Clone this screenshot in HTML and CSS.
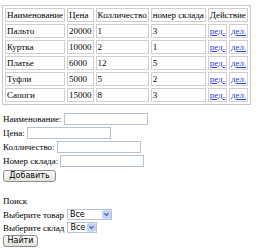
FILE: index.html
```html
<!DOCTYPE html>
<html>
    <head>
        <title>Склад</title>
        <meta charset="utf-8">
        <link rel="stylesheet" href="styles.css">
    </head>
    <body>
        <table class="goods">
            <tr>
                <th>Наименование</th>
                <th>Цена</th>
                <th>Колличество</th>
                <th>номер склада</th>
                <th colspan="2">Действие</th>
            </tr>
            <tr><td>Пальто</td><td>20000</td><td>1</td><td>3</td><td><a href="#">ред.</a></td><td><a href="#">дел.</a></td></tr>
            <tr><td>Куртка</td><td>10000</td><td>2</td><td>1</td><td><a href="#">ред.</a></td><td><a href="#">дел.</a></td></tr>
            <tr><td>Платье</td><td>6000</td><td>12</td><td>5</td><td><a href="#">ред.</a></td><td><a href="#">дел.</a></td></tr>
            <tr><td>Туфли</td><td>5000</td><td>5</td><td>2</td><td><a href="#">ред.</a></td><td><a href="#">дел.</a></td></tr>
            <tr><td>Сапоги</td><td>15000</td><td>8</td><td>3</td><td><a href="#">ред.</a></td><td><a href="#">дел.</a></td></tr>
        </table>

        <form class="add_form">
            <div class="row">Наименование: <input type="text" class="field"></div>
            <div class="row">Цена: <input type="text" class="field"></div>
            <div class="row">Колличество: <input type="text" class="field"></div>
            <div class="row">Номер склада: <input type="text" class="field"></div>
            <div class="row"><button type="button" class="btn btn_add">Добавить</button></div>
        </form>

        <form class="search_form">
            <div class="row">Поиск</div>
            <div class="row">Выберите товар
                <span class="sel sel_wide">
                    <select><option>Все</option></select>
                    <svg class="arrow" width="11" height="10" viewBox="0 0 11 10"><rect x="0.5" y="0.5" width="10" height="9" rx="1" fill="#c3d3fd" stroke="#b5c8f7"/><path d="M3 3.5 L5.5 6 L8 3.5" fill="none" stroke="#4d6185" stroke-width="1.4"/></svg>
                </span>
            </div>
            <div class="row">Выберите склад
                <span class="sel sel_short">
                    <select><option>Все</option></select>
                    <svg class="arrow" width="11" height="10" viewBox="0 0 11 10"><rect x="0.5" y="0.5" width="10" height="9" rx="1" fill="#c3d3fd" stroke="#b5c8f7"/><path d="M3 3.5 L5.5 6 L8 3.5" fill="none" stroke="#4d6185" stroke-width="1.4"/></svg>
                </span>
            </div>
            <div class="row"><button type="button" class="btn btn_find">Найти</button></div>
        </form>
    </body>
</html>
```
FILE: styles.css
```css
body {
    margin: 5px 2px;
    font-family: "Liberation Serif", "DejaVu Serif", serif;
    font-size: 9px;
    color: #000;
    background: #fff;
}

.goods {
    border: 1px solid #c8c8c8;
    border-spacing: 2px;
    font-size: 9px;
    line-height: 11px;
}

.goods th, .goods td {
    border: 1px solid #cfcfcf;
    padding: 1px 1px 0;
    text-align: left;
    font-weight: normal;
    white-space: nowrap;
}

.goods a {
    color: #2b3ed0;
}

.add_form {
    margin-top: 7px;
    padding-left: 1px;
}

.row {
    display: flex;
    align-items: center;
    gap: 2px;
    height: 14px;
    white-space: nowrap;
}

.field {
    width: 84px;
    height: 12px;
    box-sizing: border-box;
    border: 1px solid #b7c2cf;
    padding: 0;
    margin: 0;
    background: #fff;
}

.btn {
    font-family: "DejaVu Sans", "Liberation Sans", sans-serif;
    font-size: 8px;
    height: 12px;
    padding: 0 5px;
    margin-top: 1px;
    border: 1px solid #8d8d8d;
    border-radius: 3px;
    background: linear-gradient(#fdfdfd, #e4e4dc);
    color: #000;
    line-height: 10px;
}

.btn_add {
    width: 53px;
}

.btn_find {
    width: 35px;
    padding: 0;
}

.search_form {
    margin-top: 12px;
    padding-left: 1px;
}

.search_form .row {
    height: 13px;
    gap: 3px;
}

.search_form .row:first-child {
    height: 14px;
}

.sel {
    position: relative;
    display: inline-block;
    height: 11px;
}

.sel select {
    appearance: none;
    -webkit-appearance: none;
    height: 11px;
    box-sizing: border-box;
    border: 1px solid #b7c2cf;
    background: #fff;
    font-family: "DejaVu Sans", "Liberation Sans", sans-serif;
    font-size: 8px;
    line-height: 9px;
    padding: 0 0 0 2px;
    margin: 0;
    color: #000;
    vertical-align: top;
}

.sel_wide select {
    width: 45px;
}

.sel_short select {
    width: 30px;
}

.sel .arrow {
    position: absolute;
    right: 1px;
    top: 1px;
    width: 9px;
    height: 9px;
}
```
